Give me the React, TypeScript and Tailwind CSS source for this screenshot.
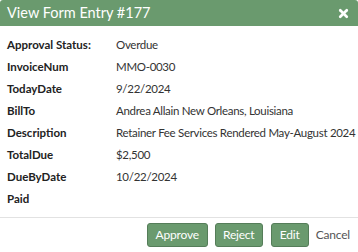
import { X } from "lucide-react";

const rows: [string, string][] = [
  ["Approval Status:", "Overdue"],
  ["InvoiceNum", "MMO-0030"],
  ["TodayDate", "9/22/2024"],
  ["BillTo", "Andrea Allain New Orleans, Louisiana"],
  ["Description", "Retainer Fee Services Rendered May-August 2024"],
  ["TotalDue", "$2,500"],
  ["DueByDate", "10/22/2024"],
  ["Paid", ""],
];

const btn = "h-[24px] bg-[#6a9a6e] text-white text-[12px] tracking-[-0.2px] rounded-[3px] border border-[#557d59] flex items-center justify-center";

export default function App() {
  return (
    <div className="w-[358px] h-[252px] bg-white overflow-hidden font-['Lato',sans-serif] text-[#333]">
      <div className="h-[26px] bg-[#6a9a6e] rounded-t-[3px] flex items-center justify-between pl-[7px] pr-[8px]">
        <span className="text-white text-[14.5px] leading-none">View Form Entry #177</span>
        <X className="text-white w-[13px] h-[13px]" strokeWidth={5} />
      </div>
      <div className="pt-[8px] pl-[7px] flex flex-col">
        {rows.map(([k, v]) => (
          <div key={k} className="flex h-[22px] items-center text-[11.5px]">
            <span className="w-[109px] shrink-0 font-bold text-[#222]">{k}</span>
            <span className="whitespace-nowrap tracking-[-0.3px]">{v}</span>
          </div>
        ))}
      </div>
      <div className="mt-[7px] border-t border-[#e2e2e2] flex items-center justify-end pt-[5px] pr-[8px]">
        <button className={`${btn} w-[61px]`}>Approve</button>
        <button className={`${btn} w-[48px] ml-[7px]`}>Reject</button>
        <button className={`${btn} w-[38px] ml-[8px]`}>Edit</button>
        <button className="text-[12px] tracking-[-0.2px] text-[#555] ml-[7px]">Cancel</button>
      </div>
    </div>
  );
}
